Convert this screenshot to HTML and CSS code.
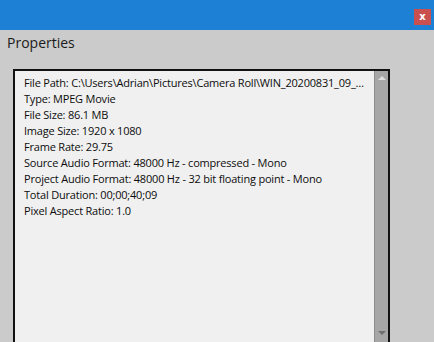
FILE: index.html
```html
<!DOCTYPE html>
<html>
<head>
<meta charset="utf-8">
<link rel="stylesheet" href="styles.css">
</head>
<body>
<div class="titlebar">
  <div class="close">x</div>
</div>
<div class="panel">
  <div class="heading">Properties</div>
  <div class="box">
    <div class="content">
      <div class="line">File Path: C:\Users\Adrian\Pictures\Camera Roll\WIN_20200831_09_…</div>
      <div class="line">Type: MPEG Movie</div>
      <div class="line">File Size: 86.1 MB</div>
      <div class="line">Image Size: 1920 x 1080</div>
      <div class="line">Frame Rate: 29.75</div>
      <div class="line">Source Audio Format: 48000 Hz - compressed - Mono</div>
      <div class="line">Project Audio Format: 48000 Hz - 32 bit floating point - Mono</div>
      <div class="line">Total Duration: 00;00;40;09</div>
      <div class="line">Pixel Aspect Ratio: 1.0</div>
    </div>
    <div class="scrollbar">
      <div class="arrow up"></div>
      <div class="arrow down"></div>
    </div>
  </div>
</div>
</body>
</html>
```
FILE: styles.css
```css
html, body {
  margin: 0;
  padding: 0;
  width: 434px;
  height: 342px;
  overflow: hidden;
  background: #cbcbcb;
  font-family: "DejaVu Sans", sans-serif;
}
.titlebar {
  height: 30px;
  background: #1e80d4;
  display: flex;
  justify-content: flex-end;
  align-items: flex-start;
}
.close {
  margin-top: 9px;
  margin-right: 3px;
  width: 17px;
  height: 16px;
  background: #c9504f;
  color: #fff;
  font-family: "DejaVu Sans", sans-serif;
  font-weight: bold;
  font-size: 10px;
  line-height: 15px;
  text-align: center;
}
.panel {
  padding: 0 0 0 13px;
}
.heading {
  font-family: "Open Sans", sans-serif;
  font-size: 14px;
  color: #1a1a1a;
  margin-left: -6px;
  padding-top: 3px;
  height: 36px;
  line-height: 20px;
}
.box {
  width: 377px;
  height: 273px;
  border: 2px solid #111;
  border-bottom: none;
  background: #f0f0f0;
  display: flex;
  box-sizing: border-box;
}
.content {
  flex: 1;
  min-width: 0;
  padding: 4px 0 0 9px;
}
.line {
  font-family: "Open Sans", sans-serif;
  font-size: 11px;
  line-height: 16px;
  color: #0d0d0d;
  white-space: nowrap;
  letter-spacing: -0.2px;
}
.scrollbar {
  width: 13px;
  background: #a6a6a6;
  border-left: 1px solid #8c8c8c;
  display: flex;
  flex-direction: column;
  justify-content: space-between;
  align-items: center;
  padding: 5px 0 7px;
}
.arrow {
  width: 0;
  height: 0;
  border-left: 4px solid transparent;
  border-right: 4px solid transparent;
}
.arrow.up {
  border-bottom: 4px solid #e0e0e0;
}
.arrow.down {
  border-top: 4px solid #6e6e6e;
}
```
